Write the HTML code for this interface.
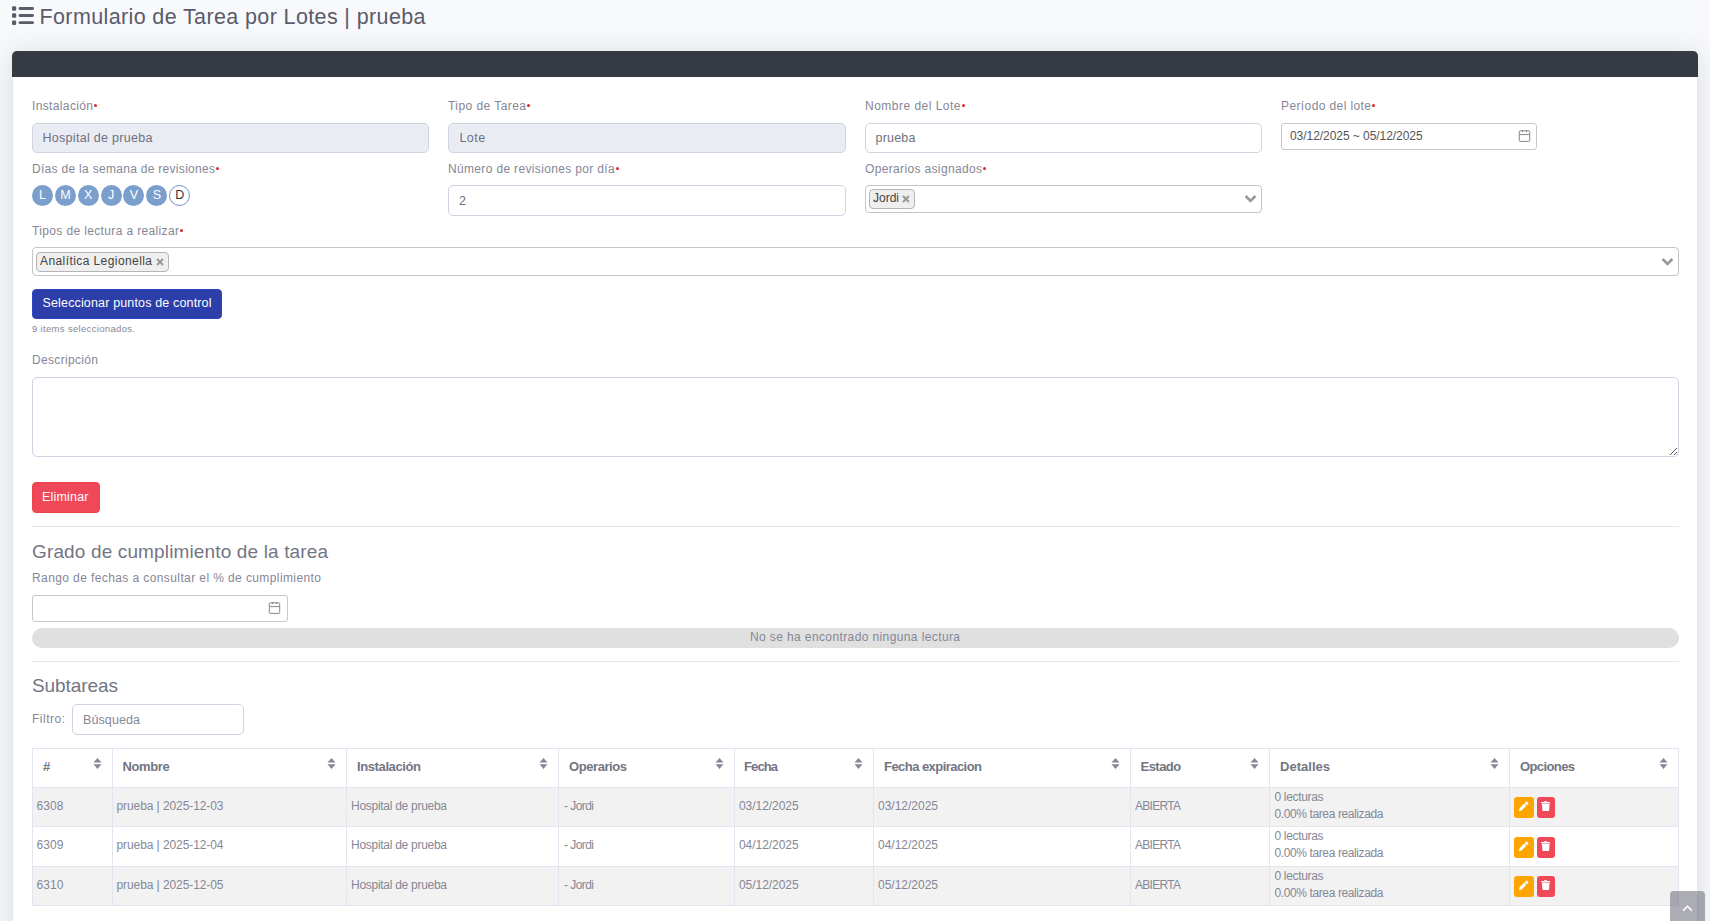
<!DOCTYPE html>
<html><head><meta charset="utf-8"><style>
html,body{margin:0;padding:0;}
body{width:1710px;height:921px;overflow:hidden;background:#f8f9fc;position:relative;font-family:"Liberation Sans", sans-serif;}
.t{position:absolute;white-space:nowrap;line-height:1;}
.b{position:absolute;}
.dot{display:inline-block;width:3px;height:3px;border-radius:50%;background:#e02424;vertical-align:0.22em;margin-left:1px;}
.circ{width:21px;height:21px;border-radius:50%;font-size:12.5px;line-height:20px;text-align:center;}
</style></head><body>
<svg class="b" style="left:12px;top:6px" width="23" height="19" viewBox="0 0 23 19"><rect x="0" y="0.3" width="4.2" height="4.5" rx="1.2" fill="#5a5c69"/><rect x="6.6" y="1.1" width="15.4" height="2.8" rx="1.4" fill="#5a5c69"/><rect x="0" y="7.3" width="4.2" height="4.5" rx="1.2" fill="#5a5c69"/><rect x="6.6" y="8.1" width="15.4" height="2.8" rx="1.4" fill="#5a5c69"/><rect x="0" y="14.5" width="4.2" height="4.5" rx="1.2" fill="#5a5c69"/><rect x="6.6" y="15.3" width="15.4" height="2.8" rx="1.4" fill="#5a5c69"/></svg>
<div class="t" style="left:39.50px;top:6.80px;font-size:21.5px;color:#5a5c69;letter-spacing:0.376px;">Formulario de Tarea por Lotes | prueba</div>
<div class="b" style="left:12px;top:51px;width:1686px;height:900px;background:#fff;border-radius:5px;box-shadow:0 2px 28px 0 rgba(58,59,69,.15);border:1px solid #e3e6f0;box-sizing:border-box;"></div>
<div class="b" style="left:12px;top:51px;width:1686px;height:26px;background:#363a43;border-radius:5px 5px 0 0;"></div>
<div class="t" style="left:32.00px;top:99.84px;font-size:12px;color:#858796;letter-spacing:0.362px;">Instalación<span class="dot"></span></div>
<div class="t" style="left:448.00px;top:99.84px;font-size:12px;color:#858796;letter-spacing:0.440px;">Tipo de Tarea<span class="dot"></span></div>
<div class="t" style="left:865.00px;top:99.84px;font-size:12px;color:#858796;letter-spacing:0.484px;">Nombre del Lote<span class="dot"></span></div>
<div class="t" style="left:1281.00px;top:99.84px;font-size:12px;color:#858796;letter-spacing:0.396px;">Período del lote<span class="dot"></span></div>
<div class="b" style="left:32px;top:123px;width:397px;height:30px;background:#eaecf4;border:1px solid #d1d3e2;border-radius:5px;box-sizing:border-box;"></div>
<div class="b" style="left:448px;top:123px;width:398px;height:30px;background:#eaecf4;border:1px solid #d1d3e2;border-radius:5px;box-sizing:border-box;"></div>
<div class="b" style="left:865px;top:123px;width:397px;height:30px;background:#fff;border:1px solid #d1d3e2;border-radius:5px;box-sizing:border-box;"></div>
<div class="t" style="left:42.50px;top:132.42px;font-size:12.5px;color:#6e707e;letter-spacing:0.298px;">Hospital de prueba</div>
<div class="t" style="left:459.50px;top:132.42px;font-size:12.5px;color:#6e707e;letter-spacing:0.419px;">Lote</div>
<div class="t" style="left:875.50px;top:132.42px;font-size:12.5px;color:#6e707e;letter-spacing:0.212px;">prueba</div>
<div class="b" style="left:1281px;top:123px;width:256px;height:27px;background:#fff;border:1px solid #c8c8c8;border-radius:3px;box-sizing:border-box;"></div>
<div class="t" style="left:1290.00px;top:130.34px;font-size:12px;color:#555;letter-spacing:-0.054px;">03/12/2025 ~ 05/12/2025</div>
<svg class="b" style="left:1518px;top:130px" width="13" height="13" viewBox="0 0 13 13"><rect x="1.3" y="0.8" width="10.4" height="10.6" rx="0.8" fill="none" stroke="#888" stroke-width="1"/><line x1="1.3" y1="4.6" x2="11.7" y2="4.6" stroke="#888" stroke-width="1"/><line x1="4.5" y1="0" x2="4.5" y2="2" stroke="#888"/><line x1="8.5" y1="0" x2="8.5" y2="2" stroke="#888"/></svg>
<div class="t" style="left:32.00px;top:162.84px;font-size:12px;color:#858796;letter-spacing:0.297px;">Días de la semana de revisiones<span class="dot"></span></div>
<div class="t" style="left:448.00px;top:162.84px;font-size:12px;color:#858796;letter-spacing:0.340px;">Número de revisiones por día<span class="dot"></span></div>
<div class="t" style="left:865.00px;top:162.84px;font-size:12px;color:#858796;letter-spacing:0.348px;">Operarios asignados<span class="dot"></span></div>
<div class="b circ" style="left:32.00px;top:185px;background:#7b9fcc;color:#fff;">L</div>
<div class="b circ" style="left:54.86px;top:185px;background:#7b9fcc;color:#fff;">M</div>
<div class="b circ" style="left:77.72px;top:185px;background:#7b9fcc;color:#fff;">X</div>
<div class="b circ" style="left:100.58px;top:185px;background:#7b9fcc;color:#fff;">J</div>
<div class="b circ" style="left:123.44px;top:185px;background:#7b9fcc;color:#fff;">V</div>
<div class="b circ" style="left:146.30px;top:185px;background:#7b9fcc;color:#fff;">S</div>
<div class="b circ" style="left:169.16px;top:185px;background:#fff;color:#333;border:1px solid #6f8fc4;box-sizing:border-box;line-height:18px;">D</div>
<div class="b" style="left:448px;top:185px;width:398px;height:31px;background:#fff;border:1px solid #d1d3e2;border-radius:5px;box-sizing:border-box;"></div>
<div class="t" style="left:459.00px;top:194.62px;font-size:12.5px;color:#6e707e;">2</div>
<div class="b" style="left:865px;top:185px;width:397px;height:28px;background:#fff;border:1px solid #c5c5c5;border-radius:4px;box-sizing:border-box;"></div>
<div class="b" style="left:869px;top:189px;width:46px;height:20px;background:#efefef;border:1px solid #b5b5b5;border-radius:4px;box-sizing:border-box;"></div>
<div class="t" style="left:873.00px;top:191.84px;font-size:12px;color:#444;letter-spacing:-0.004px;">Jordi</div>
<svg class="b" style="left:902px;top:195px" width="8" height="8" viewBox="0 0 8 8"><path d="M1 1 L7 7 M7 1 L1 7" stroke="#999" stroke-width="2"/></svg>
<svg class="b" style="left:1244px;top:194px" width="13" height="9" viewBox="0 0 13 9"><path d="M1.6 2.0 L6.5 6.9 L11.4 2.0" fill="none" stroke="#999" stroke-width="2.6"/></svg>
<div class="t" style="left:32.00px;top:224.84px;font-size:12px;color:#858796;letter-spacing:0.361px;">Tipos de lectura a realizar<span class="dot"></span></div>
<div class="b" style="left:32px;top:247px;width:1647px;height:29px;background:#fff;border:1px solid #c5c5c5;border-radius:4px;box-sizing:border-box;"></div>
<div class="b" style="left:36px;top:252px;width:133px;height:20px;background:#efefef;border:1px solid #b5b5b5;border-radius:4px;box-sizing:border-box;"></div>
<div class="t" style="left:40.00px;top:255.34px;font-size:12px;color:#444;letter-spacing:0.417px;">Analítica Legionella</div>
<svg class="b" style="left:156px;top:258px" width="8" height="8" viewBox="0 0 8 8"><path d="M1 1 L7 7 M7 1 L1 7" stroke="#999" stroke-width="2"/></svg>
<svg class="b" style="left:1661px;top:257px" width="13" height="9" viewBox="0 0 13 9"><path d="M1.6 2.0 L6.5 6.9 L11.4 2.0" fill="none" stroke="#999" stroke-width="2.6"/></svg>
<div class="b" style="left:32px;top:289px;width:190px;height:30px;background:#2b3ea9;border:1px solid #2f47bf;border-radius:4px;box-sizing:border-box;"></div>
<div class="t" style="left:42.50px;top:297.42px;font-size:12.5px;color:#fff;letter-spacing:0.154px;">Seleccionar puntos de control</div>
<div class="t" style="left:32.00px;top:323.96px;font-size:9.5px;color:#858796;letter-spacing:0.328px;">9 items seleccionados.</div>
<div class="t" style="left:32.00px;top:353.84px;font-size:12px;color:#858796;letter-spacing:0.330px;">Descripción</div>
<div class="b" style="left:32px;top:377px;width:1647px;height:80px;background:#fff;border:1px solid #d1d3e2;border-radius:5px;box-sizing:border-box;"></div>
<svg class="b" style="left:1668px;top:445px" width="10" height="11" viewBox="0 0 10 11" shape-rendering="crispEdges"><rect x="2" y="9" width="1" height="1" fill="#555"/><rect x="3" y="8" width="1" height="1" fill="#555"/><rect x="4" y="7" width="1" height="1" fill="#555"/><rect x="5" y="6" width="1" height="1" fill="#555"/><rect x="6" y="5" width="1" height="1" fill="#555"/><rect x="7" y="4" width="1" height="1" fill="#555"/><rect x="8" y="3" width="1" height="1" fill="#555"/><rect x="6" y="9" width="1" height="1" fill="#555"/><rect x="7" y="8" width="1" height="1" fill="#555"/><rect x="8" y="7" width="1" height="1" fill="#555"/></svg>
<div class="b" style="left:32px;top:482px;width:68px;height:31px;background:#f04859;border:1px solid #ec4449;box-sizing:border-box;border-radius:4px;"></div>
<div class="t" style="left:42.00px;top:491.42px;font-size:12.5px;color:#fff;letter-spacing:0.192px;">Eliminar</div>
<div class="b" style="left:32px;top:526px;width:1647px;height:1px;background:#e6e6e6;"></div>
<div class="t" style="left:32.00px;top:541.92px;font-size:19px;color:#737583;letter-spacing:0.141px;">Grado de cumplimiento de la tarea</div>
<div class="t" style="left:32.00px;top:572.34px;font-size:12px;color:#858796;letter-spacing:0.401px;">Rango de fechas a consultar el % de cumplimiento</div>
<div class="b" style="left:32px;top:595px;width:256px;height:27px;background:#fff;border:1px solid #c8c8c8;border-radius:3px;box-sizing:border-box;"></div>
<svg class="b" style="left:268px;top:602px" width="13" height="13" viewBox="0 0 13 13"><rect x="1.3" y="0.8" width="10.4" height="10.6" rx="0.8" fill="none" stroke="#888" stroke-width="1"/><line x1="1.3" y1="4.6" x2="11.7" y2="4.6" stroke="#888" stroke-width="1"/><line x1="4.5" y1="0" x2="4.5" y2="2" stroke="#888"/><line x1="8.5" y1="0" x2="8.5" y2="2" stroke="#888"/></svg>
<div class="b" style="left:32px;top:628px;width:1647px;height:20px;background:#e0e0e0;border-radius:10px;"></div>
<div class="t" style="left:750.00px;top:631.14px;font-size:12px;color:#858796;letter-spacing:0.388px;">No se ha encontrado ninguna lectura</div>
<div class="b" style="left:32px;top:661px;width:1647px;height:1px;background:#e6e6e6;"></div>
<div class="t" style="left:32.00px;top:676.42px;font-size:19px;color:#737583;letter-spacing:-0.078px;">Subtareas</div>
<div class="t" style="left:32.00px;top:713.34px;font-size:12px;color:#858796;letter-spacing:0.500px;">Filtro:</div>
<div class="b" style="left:72px;top:704px;width:172px;height:31px;background:#fff;border:1px solid #d1d3e2;border-radius:5px;box-sizing:border-box;"></div>
<div class="t" style="left:83.00px;top:714.42px;font-size:12.5px;color:#858796;letter-spacing:0.098px;">Búsqueda</div>
<div class="b" style="left:32px;top:787px;width:1647px;height:39px;background:#f2f2f2;"></div>
<div class="b" style="left:32px;top:866px;width:1647px;height:40px;background:#f2f2f2;"></div>
<div class="b" style="left:32px;top:748px;width:1647px;height:1px;background:#e3e6f0;"></div>
<div class="b" style="left:32px;top:787px;width:1647px;height:1px;background:#e3e6f0;"></div>
<div class="b" style="left:32px;top:826px;width:1647px;height:1px;background:#e3e6f0;"></div>
<div class="b" style="left:32px;top:866px;width:1647px;height:1px;background:#e3e6f0;"></div>
<div class="b" style="left:32px;top:905px;width:1647px;height:1px;background:#e3e6f0;"></div>
<div class="b" style="left:32px;top:748px;width:1px;height:158px;background:#e3e6f0;"></div>
<div class="b" style="left:112px;top:748px;width:1px;height:158px;background:#e3e6f0;"></div>
<div class="b" style="left:346px;top:748px;width:1px;height:158px;background:#e3e6f0;"></div>
<div class="b" style="left:558px;top:748px;width:1px;height:158px;background:#e3e6f0;"></div>
<div class="b" style="left:734px;top:748px;width:1px;height:158px;background:#e3e6f0;"></div>
<div class="b" style="left:873px;top:748px;width:1px;height:158px;background:#e3e6f0;"></div>
<div class="b" style="left:1130px;top:748px;width:1px;height:158px;background:#e3e6f0;"></div>
<div class="b" style="left:1269px;top:748px;width:1px;height:158px;background:#e3e6f0;"></div>
<div class="b" style="left:1509px;top:748px;width:1px;height:158px;background:#e3e6f0;"></div>
<div class="b" style="left:1678px;top:748px;width:1px;height:158px;background:#e3e6f0;"></div>
<div class="t" style="left:43.00px;top:760.00px;font-size:13px;color:#737583;font-weight:700;">#</div>
<svg class="b" style="left:93px;top:758px" width="9" height="11" viewBox="0 0 9 11"><path d="M4.5 0 L8.5 4.6 L0.5 4.6 Z M0.5 6.2 L8.5 6.2 L4.5 11 Z" fill="#858796"/></svg>
<div class="t" style="left:122.50px;top:760.00px;font-size:13px;color:#737583;font-weight:700;letter-spacing:-0.365px;">Nombre</div>
<svg class="b" style="left:327px;top:758px" width="9" height="11" viewBox="0 0 9 11"><path d="M4.5 0 L8.5 4.6 L0.5 4.6 Z M0.5 6.2 L8.5 6.2 L4.5 11 Z" fill="#858796"/></svg>
<div class="t" style="left:357.00px;top:760.00px;font-size:13px;color:#737583;font-weight:700;letter-spacing:-0.392px;">Instalación</div>
<svg class="b" style="left:539px;top:758px" width="9" height="11" viewBox="0 0 9 11"><path d="M4.5 0 L8.5 4.6 L0.5 4.6 Z M0.5 6.2 L8.5 6.2 L4.5 11 Z" fill="#858796"/></svg>
<div class="t" style="left:569.00px;top:760.00px;font-size:13px;color:#737583;font-weight:700;letter-spacing:-0.428px;">Operarios</div>
<svg class="b" style="left:715px;top:758px" width="9" height="11" viewBox="0 0 9 11"><path d="M4.5 0 L8.5 4.6 L0.5 4.6 Z M0.5 6.2 L8.5 6.2 L4.5 11 Z" fill="#858796"/></svg>
<div class="t" style="left:744.00px;top:760.00px;font-size:13px;color:#737583;font-weight:700;letter-spacing:-0.895px;">Fecha</div>
<svg class="b" style="left:854px;top:758px" width="9" height="11" viewBox="0 0 9 11"><path d="M4.5 0 L8.5 4.6 L0.5 4.6 Z M0.5 6.2 L8.5 6.2 L4.5 11 Z" fill="#858796"/></svg>
<div class="t" style="left:884.00px;top:760.00px;font-size:13px;color:#737583;font-weight:700;letter-spacing:-0.548px;">Fecha expiracion</div>
<svg class="b" style="left:1111px;top:758px" width="9" height="11" viewBox="0 0 9 11"><path d="M4.5 0 L8.5 4.6 L0.5 4.6 Z M0.5 6.2 L8.5 6.2 L4.5 11 Z" fill="#858796"/></svg>
<div class="t" style="left:1140.50px;top:760.00px;font-size:13px;color:#737583;font-weight:700;letter-spacing:-0.529px;">Estado</div>
<svg class="b" style="left:1250px;top:758px" width="9" height="11" viewBox="0 0 9 11"><path d="M4.5 0 L8.5 4.6 L0.5 4.6 Z M0.5 6.2 L8.5 6.2 L4.5 11 Z" fill="#858796"/></svg>
<div class="t" style="left:1280.00px;top:760.00px;font-size:13px;color:#737583;font-weight:700;letter-spacing:0.018px;">Detalles</div>
<svg class="b" style="left:1490px;top:758px" width="9" height="11" viewBox="0 0 9 11"><path d="M4.5 0 L8.5 4.6 L0.5 4.6 Z M0.5 6.2 L8.5 6.2 L4.5 11 Z" fill="#858796"/></svg>
<div class="t" style="left:1520.00px;top:760.00px;font-size:13px;color:#737583;font-weight:700;letter-spacing:-0.607px;">Opciones</div>
<svg class="b" style="left:1659px;top:758px" width="9" height="11" viewBox="0 0 9 11"><path d="M4.5 0 L8.5 4.6 L0.5 4.6 Z M0.5 6.2 L8.5 6.2 L4.5 11 Z" fill="#858796"/></svg>
<div class="t" style="left:36.50px;top:799.84px;font-size:12px;color:#858796;letter-spacing:0.099px;">6308</div>
<div class="t" style="left:116.50px;top:799.84px;font-size:12px;color:#858796;letter-spacing:-0.086px;">prueba | 2025-12-03</div>
<div class="t" style="left:351.00px;top:799.84px;font-size:12px;color:#858796;letter-spacing:-0.278px;">Hospital de prueba</div>
<div class="t" style="left:564.00px;top:799.84px;font-size:12px;color:#858796;letter-spacing:-0.557px;">- Jordi</div>
<div class="t" style="left:739.00px;top:799.84px;font-size:12px;color:#858796;letter-spacing:-0.051px;">03/12/2025</div>
<div class="t" style="left:878.00px;top:799.84px;font-size:12px;color:#858796;letter-spacing:-0.007px;">03/12/2025</div>
<div class="t" style="left:1135.00px;top:799.84px;font-size:12px;color:#858796;letter-spacing:-0.708px;">ABIERTA</div>
<div class="t" style="left:1274.50px;top:790.84px;font-size:12px;color:#858796;letter-spacing:-0.337px;">0 lecturas</div>
<div class="t" style="left:1274.50px;top:807.84px;font-size:12px;color:#858796;letter-spacing:-0.388px;">0.00% tarea realizada</div>
<div class="b" style="left:1514px;top:797px;width:20px;height:21px;background:#ffa502;border-radius:3px;"><svg width="20" height="21" viewBox="0 0 20 21"><path d="M5.0 14.0 L5.57 11.31 L10.30 6.58 L12.42 8.70 L7.69 13.43 Z M10.80 6.08 L12.54 4.34 L14.66 6.46 L12.92 8.20 Z" fill="#fff"/></svg></div>
<div class="b" style="left:1537px;top:797px;width:18px;height:21px;background:#ef4859;border-radius:3px;"><svg width="18" height="21" viewBox="0 0 18 21"><path d="M4.6 5.0 H12.7 Q13.2 5.0 13.2 5.5 V5.7 Q13.2 6.2 12.7 6.2 H4.6 Q4.1 6.2 4.1 5.7 V5.5 Q4.1 5.0 4.6 5.0 Z M7.4 4.2 H9.9 L10.3 5.0 H7.0 Z M4.8 6.8 H12.6 L12.0 14.1 H5.6 Z" fill="#fff"/></svg></div>
<div class="t" style="left:36.50px;top:839.34px;font-size:12px;color:#858796;letter-spacing:0.099px;">6309</div>
<div class="t" style="left:116.50px;top:839.34px;font-size:12px;color:#858796;letter-spacing:-0.086px;">prueba | 2025-12-04</div>
<div class="t" style="left:351.00px;top:839.34px;font-size:12px;color:#858796;letter-spacing:-0.278px;">Hospital de prueba</div>
<div class="t" style="left:564.00px;top:839.34px;font-size:12px;color:#858796;letter-spacing:-0.557px;">- Jordi</div>
<div class="t" style="left:739.00px;top:839.34px;font-size:12px;color:#858796;letter-spacing:-0.051px;">04/12/2025</div>
<div class="t" style="left:878.00px;top:839.34px;font-size:12px;color:#858796;letter-spacing:-0.007px;">04/12/2025</div>
<div class="t" style="left:1135.00px;top:839.34px;font-size:12px;color:#858796;letter-spacing:-0.708px;">ABIERTA</div>
<div class="t" style="left:1274.50px;top:830.34px;font-size:12px;color:#858796;letter-spacing:-0.337px;">0 lecturas</div>
<div class="t" style="left:1274.50px;top:847.34px;font-size:12px;color:#858796;letter-spacing:-0.388px;">0.00% tarea realizada</div>
<div class="b" style="left:1514px;top:836.5px;width:20px;height:21px;background:#ffa502;border-radius:3px;"><svg width="20" height="21" viewBox="0 0 20 21"><path d="M5.0 14.0 L5.57 11.31 L10.30 6.58 L12.42 8.70 L7.69 13.43 Z M10.80 6.08 L12.54 4.34 L14.66 6.46 L12.92 8.20 Z" fill="#fff"/></svg></div>
<div class="b" style="left:1537px;top:836.5px;width:18px;height:21px;background:#ef4859;border-radius:3px;"><svg width="18" height="21" viewBox="0 0 18 21"><path d="M4.6 5.0 H12.7 Q13.2 5.0 13.2 5.5 V5.7 Q13.2 6.2 12.7 6.2 H4.6 Q4.1 6.2 4.1 5.7 V5.5 Q4.1 5.0 4.6 5.0 Z M7.4 4.2 H9.9 L10.3 5.0 H7.0 Z M4.8 6.8 H12.6 L12.0 14.1 H5.6 Z" fill="#fff"/></svg></div>
<div class="t" style="left:36.50px;top:878.84px;font-size:12px;color:#858796;letter-spacing:0.099px;">6310</div>
<div class="t" style="left:116.50px;top:878.84px;font-size:12px;color:#858796;letter-spacing:-0.086px;">prueba | 2025-12-05</div>
<div class="t" style="left:351.00px;top:878.84px;font-size:12px;color:#858796;letter-spacing:-0.278px;">Hospital de prueba</div>
<div class="t" style="left:564.00px;top:878.84px;font-size:12px;color:#858796;letter-spacing:-0.557px;">- Jordi</div>
<div class="t" style="left:739.00px;top:878.84px;font-size:12px;color:#858796;letter-spacing:-0.051px;">05/12/2025</div>
<div class="t" style="left:878.00px;top:878.84px;font-size:12px;color:#858796;letter-spacing:-0.007px;">05/12/2025</div>
<div class="t" style="left:1135.00px;top:878.84px;font-size:12px;color:#858796;letter-spacing:-0.708px;">ABIERTA</div>
<div class="t" style="left:1274.50px;top:869.84px;font-size:12px;color:#858796;letter-spacing:-0.337px;">0 lecturas</div>
<div class="t" style="left:1274.50px;top:886.84px;font-size:12px;color:#858796;letter-spacing:-0.388px;">0.00% tarea realizada</div>
<div class="b" style="left:1514px;top:876px;width:20px;height:21px;background:#ffa502;border-radius:3px;"><svg width="20" height="21" viewBox="0 0 20 21"><path d="M5.0 14.0 L5.57 11.31 L10.30 6.58 L12.42 8.70 L7.69 13.43 Z M10.80 6.08 L12.54 4.34 L14.66 6.46 L12.92 8.20 Z" fill="#fff"/></svg></div>
<div class="b" style="left:1537px;top:876px;width:18px;height:21px;background:#ef4859;border-radius:3px;"><svg width="18" height="21" viewBox="0 0 18 21"><path d="M4.6 5.0 H12.7 Q13.2 5.0 13.2 5.5 V5.7 Q13.2 6.2 12.7 6.2 H4.6 Q4.1 6.2 4.1 5.7 V5.5 Q4.1 5.0 4.6 5.0 Z M7.4 4.2 H9.9 L10.3 5.0 H7.0 Z M4.8 6.8 H12.6 L12.0 14.1 H5.6 Z" fill="#fff"/></svg></div>
<div class="b" style="left:1670px;top:891px;width:35px;height:40px;background:rgba(90,92,105,.5);border-radius:4px;"><svg width="35" height="30" viewBox="0 0 35 30"><path d="M13.2 19.6 L17.5 15.3 L21.8 19.6" fill="none" stroke="#fff" stroke-width="1.6"/></svg></div>
</body></html>
